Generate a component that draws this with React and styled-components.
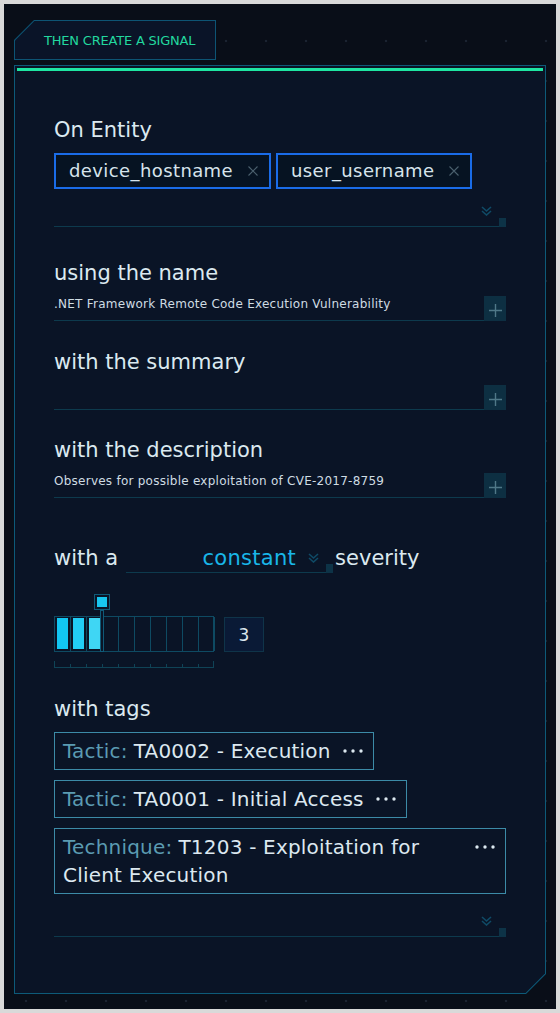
import React from "react";
import styled, { createGlobalStyle } from "styled-components";

const GlobalStyle = createGlobalStyle`
  html, body { margin: 0; padding: 0; }
  body {
    background: #d9d9d9;
    font-family: "DejaVu Sans", "Noto Sans", sans-serif;
  }
  * { box-sizing: border-box; }
`;

const Frame = styled.div`
  padding: 4px;
`;

const Screen = styled.div`
  width: 552px;
  height: 1005px;
  display: flex;
  flex-direction: column;
  padding: 16px 10px 15px 10px;
  background-color: #090e18;
  background-image: radial-gradient(circle, #1b2331 1px, transparent 1.6px);
  background-size: 40px 40px;
  background-position: 2px 17px;
`;

const TabFrame = styled.div`
  width: 202px;
  height: 40px;
  padding: 1px;
  background: #0d5474;
  clip-path: polygon(20px 0, 100% 0, 100% 100%, 0 100%, 0 20px);
`;

const TabFace = styled.div`
  height: 100%;
  background: #0a1428;
  clip-path: polygon(19.4px 0, 100% 0, 100% 100%, 0 100%, 0 19.4px);
  display: flex;
  align-items: center;
  padding-left: 29px;
  color: #22d89f;
  font-size: 13px;
  letter-spacing: -0.2px;
  text-transform: uppercase;
  white-space: nowrap;
`;

const PanelFrame = styled.div`
  flex: 1;
  display: flex;
  margin-top: 5px;
  padding: 1px;
  background: #0d5a78;
  clip-path: polygon(0 0, 100% 0, 100% calc(100% - 20px), calc(100% - 20px) 100%, 0 100%);
`;

const PanelFace = styled.div`
  flex: 1;
  display: flex;
  flex-direction: column;
  padding: 2px;
  background: #0a1426;
  clip-path: polygon(0 0, 100% 0, 100% calc(100% - 19.4px), calc(100% - 19.4px) 100%, 0 100%);
`;

const AccentBar = styled.div`
  height: 3px;
  background: #1ee6a2;
`;

const Content = styled.div`
  display: flex;
  flex-direction: column;
  padding: 0 37px;
`;

const Label = styled.div`
  margin-top: ${(p) => p.$mt}px;
  padding-top: 2px;
  font-size: 21px;
  line-height: 24px;
  color: #dbe9f0;
  white-space: nowrap;
`;

const ChipRow = styled.div`
  display: flex;
  flex-wrap: wrap;
  gap: 5px;
  margin-top: 11px;
`;

const Chip = styled.div`
  display: flex;
  align-items: center;
  height: 36px;
  padding: 0 11px 0 13px;
  border: 2px solid #1a6ce8;
  background: #061322;
  color: #d6e4ec;
  font-size: 18px;
  line-height: 32px;
  letter-spacing: 0.4px;
`;

const ChipClose = styled.span`
  display: flex;
  margin-left: 15px;
`;

const FieldFoot = styled.div`
  display: flex;
  align-items: flex-end;
  height: ${(p) => p.$h}px;
`;

const Track = styled.div`
  flex: 1;
  height: 100%;
  display: flex;
  justify-content: flex-end;
  align-items: flex-end;
  padding: 0 7px 10px 0;
  border-bottom: 1px solid #0d3a4d;
`;

const EndCap = styled.div`
  width: 7px;
  height: 9px;
  flex: none;
  align-self: flex-end;
  background: #0d3347;
`;

const InputRow = styled.div`
  display: flex;
  height: 25px;
  margin-top: 11px;
`;

const InputArea = styled.div`
  flex: 1;
  padding-top: 1px;
  border-bottom: 1px solid #0d3a4d;
  font-size: 12px;
  line-height: 14px;
  letter-spacing: 0.25px;
  color: #cfdce3;
  white-space: nowrap;
`;

const PlusButton = styled.div`
  width: 22px;
  flex: none;
  display: flex;
  align-items: center;
  justify-content: center;
  padding-top: 4px;
  background: #0d2f42;
`;

const SeverityRow = styled.div`
  display: flex;
  align-items: flex-start;
  height: 29px;
  margin-top: 46px;
`;

const Phrase = styled.span`
  padding-top: 2px;
  font-size: 21px;
  line-height: 24px;
  color: #dbe9f0;
  white-space: nowrap;
`;

const Select = styled.div`
  display: flex;
  width: 207px;
  height: 29px;
  margin: 0 2px 0 8px;
`;

const SelectTrack = styled.div`
  flex: 1;
  display: flex;
  justify-content: flex-end;
  align-items: flex-start;
  padding-right: 7px;
  border-bottom: 1px solid #0d3a4d;
`;

const SelectValue = styled.span`
  padding-top: 2px;
  font-size: 21px;
  line-height: 24px;
  letter-spacing: 0.3px;
  color: #19b6e8;
`;

const SelectChevron = styled.span`
  display: flex;
  margin: 9px 0 0 12px;
`;

const SliderArea = styled.div`
  display: flex;
  align-items: flex-start;
  gap: 10px;
  margin-top: 43px;
`;

const SliderColumn = styled.div`
  display: flex;
  flex-direction: column;
`;

const Bar = styled.div`
  position: relative;
  width: 160px;
  height: 36px;
  display: flex;
  border: 1px solid #0e4a62;
`;

const Cell = styled.div`
  width: 16px;
  flex: none;
  padding: 1px 2px 2px 2px;
  border-right: 1px solid #0e4a62;
  &:last-child { border-right: none; width: 14px; }
`;

const CellFill = styled.div`
  height: 100%;
  background: ${(p) => p.$color};
`;

const HandleStem = styled.div`
  position: absolute;
  left: 45px;
  top: -7px;
  bottom: -1px;
  width: 4px;
  border: 1px solid #0f5a78;
  background: #0a1426;
`;

const HandleKnob = styled.div`
  position: absolute;
  left: 39px;
  top: -23px;
  width: 16px;
  height: 16px;
  padding: 2px;
  border: 1px solid #0f5a78;
  background: #0a1426;
`;

const KnobCore = styled.div`
  width: 100%;
  height: 100%;
  background: #18c6f0;
`;

const Ticks = styled.svg`
  display: block;
  margin-top: 9px;
`;

const ValueBox = styled.div`
  width: 40px;
  height: 35px;
  margin-top: 1px;
  display: flex;
  align-items: center;
  justify-content: center;
  border: 1px solid #0f3449;
  background: #0a1a36;
  color: #dce8ef;
  font-size: 17px;
`;

const TagList = styled.div`
  display: flex;
  flex-direction: column;
  align-items: flex-start;
  gap: 10px;
  margin-top: 11px;
`;

const Tag = styled.div`
  display: flex;
  align-items: flex-start;
  max-width: 100%;
  padding: 4px 10px 4px 8px;
  border: 1px solid #3c8ba7;
  font-size: 20px;
  line-height: 28px;
  letter-spacing: 0.2px;
  color: #dce8f0;
`;

const TagText = styled.div`
  min-width: 0;
`;

const TagKey = styled.span`
  color: #5b9bb2;
  margin-right: 6px;
`;

const TagDots = styled.span`
  display: flex;
  align-items: center;
  height: 28px;
  margin-left: 12px;
  flex: none;
`;

const Chevron = () => (
  <svg width="11" height="10" viewBox="0 0 11 10">
    <path d="M1 1 L5.5 5 L10 1 M1 5 L5.5 9 L10 5" fill="none" stroke="#0f4a66" strokeWidth="1.6" />
  </svg>
);

const CloseIcon = () => (
  <svg width="10" height="10" viewBox="0 0 10 10">
    <path d="M0.5 0.5 L9.5 9.5 M9.5 0.5 L0.5 9.5" stroke="#4a5f6d" strokeWidth="1.1" />
  </svg>
);

const PlusIcon = () => (
  <svg width="13" height="13" viewBox="0 0 13 13">
    <path d="M6.5 0 V13 M0 6.5 H13" stroke="#4f7888" strokeWidth="1.4" />
  </svg>
);

const Dots = () => (
  <svg width="20" height="4" viewBox="0 0 20 4">
    <circle cx="2" cy="2" r="1.7" fill="#dce8f0" />
    <circle cx="10" cy="2" r="1.7" fill="#dce8f0" />
    <circle cx="18" cy="2" r="1.7" fill="#dce8f0" />
  </svg>
);

const DropdownFoot = ({ h }) => (
  <FieldFoot $h={h}>
    <Track>
      <Chevron />
    </Track>
    <EndCap />
  </FieldFoot>
);

const TextField = ({ value }) => (
  <InputRow>
    <InputArea>{value}</InputArea>
    <PlusButton>
      <PlusIcon />
    </PlusButton>
  </InputRow>
);

const fills = ["#12c6f2", "#22cef6", "#3fd6f4"];
const level = 3;

const TickScale = () => {
  const ticks = [];
  for (let i = 0; i <= 10; i++) {
    const x = i === 10 ? 159.5 : 0.5 + i * 16;
    const end = i === 0 || i === 10;
    ticks.push(<line key={i} x1={x} x2={x} y1={end ? 0 : 3} y2={7} stroke="#0f4356" strokeWidth="1" />);
  }
  return (
    <Ticks width="160" height="7" viewBox="0 0 160 7">
      <line x1="0" x2="160" y1="6.5" y2="6.5" stroke="#0f4356" strokeWidth="1" />
      {ticks}
    </Ticks>
  );
};

const tags = [
  { key: "Tactic:", value: "TA0002 - Execution" },
  { key: "Tactic:", value: "TA0001 - Initial Access" },
  { key: "Technique:", value: "T1203 - Exploitation for Client Execution" },
];

export default function App() {
  return (
    <>
      <GlobalStyle />
      <Frame>
        <Screen>
          <TabFrame>
            <TabFace>Then create a signal</TabFace>
          </TabFrame>
          <PanelFrame>
            <PanelFace>
              <AccentBar />
              <Content>
                <Label $mt={45}>On Entity</Label>
                <ChipRow>
                  {["device_hostname", "user_username"].map((c) => (
                    <Chip key={c}>
                      {c}
                      <ChipClose>
                        <CloseIcon />
                      </ChipClose>
                    </Chip>
                  ))}
                </ChipRow>
                <DropdownFoot h={38} />

                <Label $mt={32}>using the name</Label>
                <TextField value=".NET Framework Remote Code Execution Vulnerability" />

                <Label $mt={27}>with the summary</Label>
                <TextField value="" />

                <Label $mt={26}>with the description</Label>
                <TextField value="Observes for possible exploitation of CVE-2017-8759" />

                <SeverityRow>
                  <Phrase>with a</Phrase>
                  <Select>
                    <SelectTrack>
                      <SelectValue>constant</SelectValue>
                      <SelectChevron>
                        <Chevron />
                      </SelectChevron>
                    </SelectTrack>
                    <EndCap />
                  </Select>
                  <Phrase>severity</Phrase>
                </SeverityRow>

                <SliderArea>
                  <SliderColumn>
                    <Bar>
                      {Array.from({ length: 10 }).map((_, i) => (
                        <Cell key={i}>{i < level && <CellFill $color={fills[i]} />}</Cell>
                      ))}
                      <HandleStem />
                      <HandleKnob>
                        <KnobCore />
                      </HandleKnob>
                    </Bar>
                    <TickScale />
                  </SliderColumn>
                  <ValueBox>{level}</ValueBox>
                </SliderArea>

                <Label $mt={27}>with tags</Label>
                <TagList>
                  {tags.map((t) => (
                    <Tag key={t.value}>
                      <TagText>
                        <TagKey>{t.key}</TagKey>
                        {t.value}
                      </TagText>
                      <TagDots>
                        <Dots />
                      </TagDots>
                    </Tag>
                  ))}
                </TagList>
                <DropdownFoot h={43} />
              </Content>
            </PanelFace>
          </PanelFrame>
        </Screen>
      </Frame>
    </>
  );
}
